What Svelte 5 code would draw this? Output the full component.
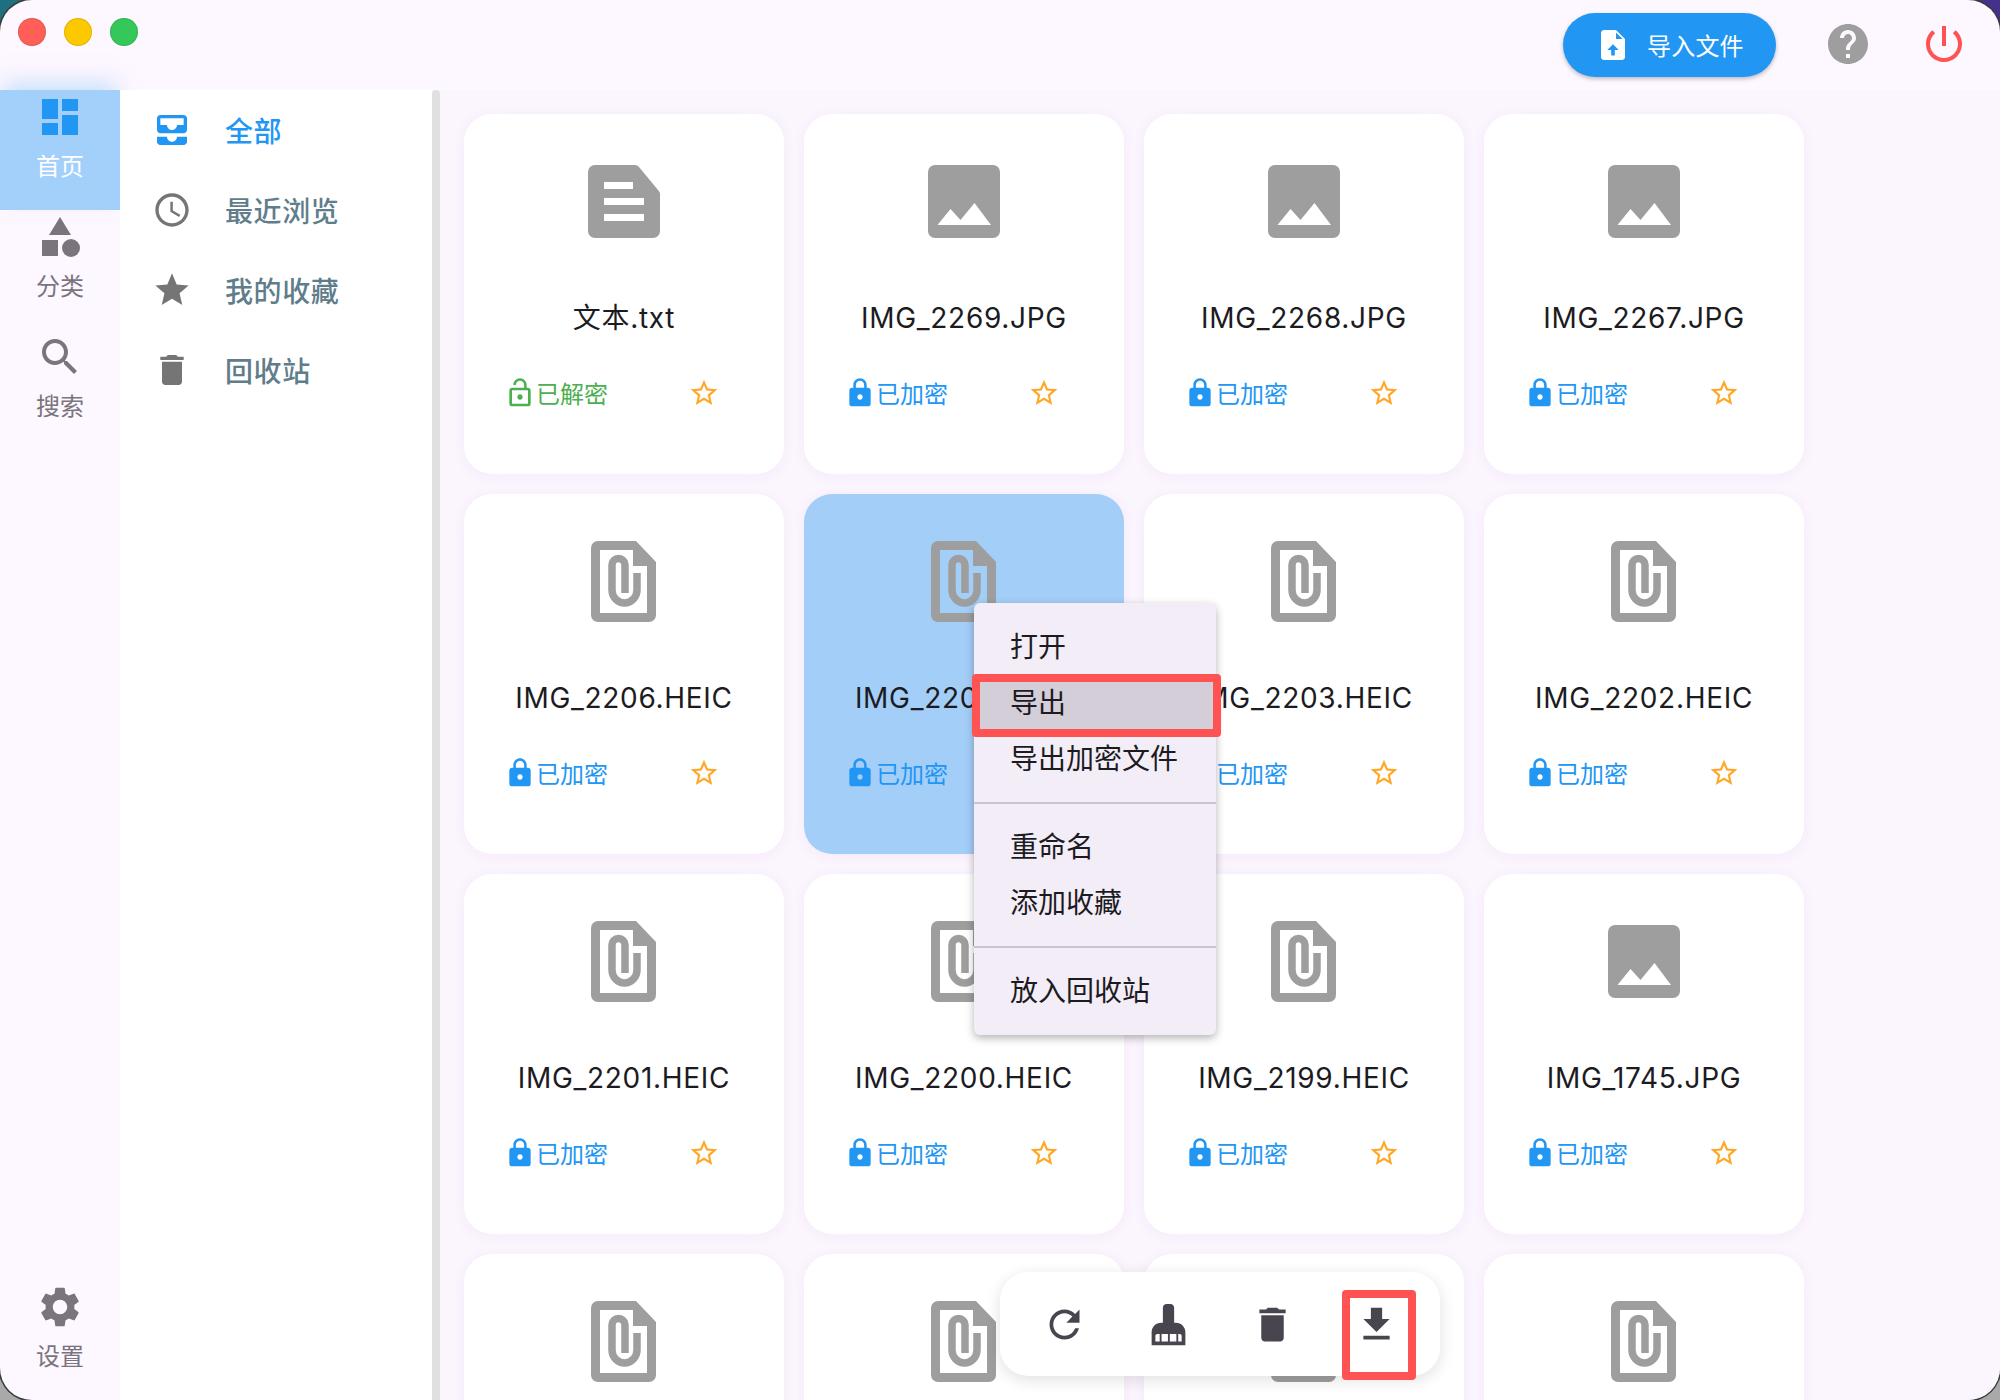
<script>
    const files = [
        { name: "文本.txt", kind: "text", open: true },
        { name: "IMG_2269.JPG", kind: "image" },
        { name: "IMG_2268.JPG", kind: "image" },
        { name: "IMG_2267.JPG", kind: "image" },
        { name: "IMG_2206.HEIC", kind: "clip" },
        { name: "IMG_2204.HEIC", kind: "clip", selected: true },
        { name: "IMG_2203.HEIC", kind: "clip" },
        { name: "IMG_2202.HEIC", kind: "clip" },
        { name: "IMG_2201.HEIC", kind: "clip" },
        { name: "IMG_2200.HEIC", kind: "clip" },
        { name: "IMG_2199.HEIC", kind: "clip" },
        { name: "IMG_1745.JPG", kind: "image" },
        { name: "IMG_1744.HEIC", kind: "clip" },
        { name: "IMG_1743.HEIC", kind: "clip" },
        { name: "IMG_1742.HEIC", kind: "clip" },
        { name: "IMG_1741.HEIC", kind: "clip" },
    ];

    const sections = [
        {
            label: "全部",
            active: true,
            d: "M19 3H5c-1.1 0-2 .9-2 2v7c0 1.1.9 2 2 2h14c1.1 0 2-.9 2-2V5c0-1.1-.9-2-2-2zm0 6h-4c0 1.62-1.38 3-3 3s-3-1.38-3-3H5V5h14v4zm-4 7h6v3c0 1.1-.9 2-2 2H5c-1.1 0-2-.9-2-2v-3h6c0 1.66 1.34 3 3 3s3-1.34 3-3z",
        },
        {
            label: "最近浏览",
            d: "M11.99 2C6.47 2 2 6.48 2 12s4.47 10 9.99 10C17.52 22 22 17.52 22 12S17.52 2 11.99 2zM12 20c-4.42 0-8-3.58-8-8s3.58-8 8-8 8 3.58 8 8-3.58 8-8 8zm.5-13H11v6l5.25 3.15.75-1.23-4.5-2.67z",
        },
        {
            label: "我的收藏",
            d: "M12 17.27L18.18 21l-1.64-7.03L22 9.24l-7.19-.61L12 2 9.19 8.63 2 9.24l5.46 4.73L5.82 21z",
        },
        {
            label: "回收站",
            d: "M6 19c0 1.1.9 2 2 2h8c1.1 0 2-.9 2-2V7H6v12zM19 4h-3.5l-1-1h-5l-1 1H5v2h14V4z",
        },
    ];

    const menu = [
        ["打开", "导出", "导出加密文件"],
        ["重命名", "添加收藏"],
        ["放入回收站"],
    ];
</script>

<div class="desktop">
    <div class="window">
        <header class="titlebar">
            <div class="lights">
                <span class="light red"></span>
                <span class="light yellow"></span>
                <span class="light green"></span>
            </div>
            <div class="actions">
                <button class="import">
                    <svg width="36" height="36" viewBox="0 0 24 24">
                        <path fill="#fff" d="M14 2H6c-1.1 0-2 .9-2 2v16c0 1.1.9 2 2 2h12c1.1 0 2-.9 2-2V8l-6-6z" />
                        <path fill="#2196f3" d="M14 3.6 18.4 8H14zM8.2 15.4l3.8-3.9 3.8 3.9h-2.6V19h-2.4v-3.6z" />
                    </svg>
                    <span>导入文件</span>
                </button>
                <svg width="48" height="48" viewBox="0 0 24 24" fill="#9e9e9e">
                    <path d="M12 2C6.48 2 2 6.48 2 12s4.48 10 10 10 10-4.48 10-10S17.52 2 12 2zm1 17h-2v-2h2v2zm2.07-7.75l-.9.92C13.45 12.9 13 13.5 13 15h-2v-.5c0-1.1.45-2.1 1.17-2.83l1.24-1.26c.37-.36.59-.86.59-1.41 0-1.1-.9-2-2-2s-2 .9-2 2H8c0-2.21 1.79-4 4-4s4 1.79 4 4c0 .88-.36 1.68-.93 2.25z" />
                </svg>
                <svg width="48" height="48" viewBox="0 0 24 24" fill="#ff5252">
                    <path d="M13 3h-2v10h2V3zm4.83 2.17l-1.42 1.42C17.99 7.86 19 9.81 19 12c0 3.87-3.13 7-7 7s-7-3.13-7-7c0-2.19 1.01-4.14 2.58-5.42L6.17 5.17C4.23 6.82 3 9.26 3 12c0 4.97 4.03 9 9 9s9-4.03 9-9c0-2.74-1.23-5.18-3.17-6.83z" />
                </svg>
            </div>
        </header>

        <div class="body">
            <nav class="rail">
                <div class="rail-item selected">
                    <svg width="48" height="48" viewBox="0 0 24 24" fill="#2196f3">
                        <path d="M3 13h8V3H3v10zm0 8h8v-6H3v6zm10 0h8V11h-8v10zm0-18v6h8V3h-8z" />
                    </svg>
                    <span>首页</span>
                </div>
                <div class="rail-item">
                    <svg width="48" height="48" viewBox="0 0 24 24">
                        <path d="M12 2l-5.5 9h11z" />
                        <circle cx="17.5" cy="17.5" r="4.5" />
                        <path d="M3 13.5h8v8H3z" />
                    </svg>
                    <span>分类</span>
                </div>
                <div class="rail-item">
                    <svg width="48" height="48" viewBox="0 0 24 24">
                        <path d="M15.5 14h-.79l-.28-.27C15.41 12.59 16 11.11 16 9.5 16 5.91 13.09 3 9.5 3S3 5.91 3 9.5 5.91 16 9.5 16c1.61 0 3.09-.59 4.23-1.57l.27.28v.79l5 4.99L20.49 19l-4.99-5zm-6 0C7.01 14 5 11.99 5 9.5S7.01 5 9.5 5 14 7.01 14 9.5 11.99 14 9.5 14z" />
                    </svg>
                    <span>搜索</span>
                </div>
                <div class="rail-item bottom">
                    <svg width="48" height="48" viewBox="0 0 24 24">
                        <path d="M19.14 12.94c.04-.3.06-.61.06-.94 0-.32-.02-.64-.07-.94l2.03-1.58c.18-.14.23-.41.12-.61l-1.92-3.32c-.12-.22-.37-.29-.59-.22l-2.39.96c-.5-.38-1.03-.7-1.62-.94l-.36-2.54c-.04-.24-.24-.41-.48-.41h-3.84c-.24 0-.43.17-.47.41l-.36 2.54c-.59.24-1.13.57-1.62.94l-2.39-.96c-.22-.08-.47 0-.59.22L2.74 8.87c-.12.21-.08.47.12.61l2.03 1.58c-.05.3-.09.63-.09.94s.02.64.07.94l-2.03 1.58c-.18.14-.23.41-.12.61l1.92 3.32c.12.22.37.29.59.22l2.39-.96c.5.38 1.03.7 1.62.94l.36 2.54c.05.24.24.41.48.41h3.84c.24 0 .44-.17.47-.41l.36-2.54c.59-.24 1.13-.56 1.62-.94l2.39.96c.22.08.47 0 .59-.22l1.92-3.32c.12-.22.07-.47-.12-.61l-2.01-1.58zM12 15.6c-1.98 0-3.6-1.62-3.6-3.6s1.62-3.6 3.6-3.6 3.6 1.62 3.6 3.6-1.62 3.6-3.6 3.6z" />
                    </svg>
                    <span>设置</span>
                </div>
            </nav>

            <aside class="panel">
                {#each sections as s}
                    <div class="panel-item" class:active={s.active}>
                        <svg width="40" height="40" viewBox="0 0 24 24"><path d={s.d} /></svg>
                        <span>{s.label}</span>
                    </div>
                {/each}
            </aside>
            <div class="scrollbar"></div>

            <main class="content">
                <div class="grid">
                    {#each files as f}
                        <div class="card" class:selected={f.selected}>
                            <div class="file-icon">
                                {#if f.kind === "text"}
                                    <svg width="72" height="73" viewBox="0 0 72 73">
                                        <path fill="#9e9e9e" d="M7 0H47a5 5 0 0 1 4 2L70 25a6 6 0 0 1 2 5V66a7 7 0 0 1-7 7H7a7 7 0 0 1-7-7V7a7 7 0 0 1 7-7z" />
                                        <path fill="#fff" d="M16 17H45V24H16zM16 33H56V40H16zM16 49H56V56H16z" />
                                    </svg>
                                {:else if f.kind === "image"}
                                    <svg width="72" height="73" viewBox="0 0 72 73">
                                        <rect width="72" height="73" rx="7" fill="#9e9e9e" />
                                        <path fill="#fff" d="M9.5 60 22.5 44 32.5 55 46.5 38 63 60z" />
                                    </svg>
                                {:else}
                                    <svg width="66" height="81" viewBox="0 0 66 81">
                                        <path fill="#9e9e9e" fill-rule="evenodd" d="M7 0H45L65 21V74a7 7 0 0 1-7 7H7a7 7 0 0 1-7-7V7a7 7 0 0 1 7-7zM9 9V72H56V25H42V9z" />
                                        <path fill="none" stroke="#9e9e9e" stroke-width="7.5" d="M46 32V49a12.5 13 0 0 1-25 0V24a6.5 6.5 0 0 1 13 0V52" />
                                    </svg>
                                {/if}
                            </div>
                            <div class="name">{f.name}</div>
                            <div class="status" class:open={f.open}>
                                <svg width="32" height="32" viewBox="0 0 24 24">
                                    {#if f.open}
                                        <path d="M12 17c1.1 0 2-.9 2-2s-.9-2-2-2-2 .9-2 2 .9 2 2 2zm6-9h-1V6c0-2.76-2.24-5-5-5S7 3.24 7 6h1.9c0-1.71 1.39-3.1 3.1-3.1 1.71 0 3.1 1.39 3.1 3.1v2H6c-1.1 0-2 .9-2 2v10c0 1.1.9 2 2 2h12c1.1 0 2-.9 2-2V10c0-1.1-.9-2-2-2zm0 12H6V10h12v10z" />
                                    {:else}
                                        <path d="M18 8h-1V6c0-2.76-2.24-5-5-5S7 3.24 7 6v2H6c-1.1 0-2 .9-2 2v10c0 1.1.9 2 2 2h12c1.1 0 2-.9 2-2V10c0-1.1-.9-2-2-2zm-6 9c-1.1 0-2-.9-2-2s.9-2 2-2 2 .9 2 2-.9 2-2 2zm3.1-9H8.9V6c0-1.71 1.39-3.1 3.1-3.1 1.71 0 3.1 1.39 3.1 3.1v2z" />
                                    {/if}
                                </svg>
                                <span class="state">{f.open ? "已解密" : "已加密"}</span>
                                <svg class="star" width="32" height="32" viewBox="0 0 24 24">
                                    <path d="M22 9.24l-7.19-.62L12 2 9.19 8.63 2 9.24l5.46 4.73L5.82 21 12 17.27 18.18 21l-1.63-7.03L22 9.24zM12 15.4l-3.76 2.27 1-4.28-3.32-2.88 4.38-.38L12 6.1l1.71 4.04 4.38.38-3.32 2.88 1 4.28L12 15.4z" />
                                </svg>
                            </div>
                        </div>
                    {/each}
                </div>
            </main>
        </div>

        <div class="context-menu">
            {#each menu as group, i}
                {#if i > 0}<div class="divider"></div>{/if}
                {#each group as item}
                    <div class="menu-item" class:hover={item === "导出"}>{item}</div>
                {/each}
            {/each}
        </div>
        <div class="mark mark-menu"></div>

        <div class="toolbar">
            <div class="tool">
                <svg width="45" height="45" viewBox="0 0 24 24">
                    <path d="M17.65 6.35C16.2 4.9 14.21 4 12 4c-4.42 0-7.99 3.58-7.99 8s3.57 8 7.99 8c3.73 0 6.84-2.55 7.73-6h-2.08c-.82 2.33-3.04 4-5.65 4-3.31 0-6-2.69-6-6s2.69-6 6-6c1.66 0 3.14.69 4.22 1.78L13 11h7V4l-2.35 2.35z" />
                </svg>
            </div>
            <div class="tool">
                <svg width="45" height="45" viewBox="0 0 24 24">
                    <path d="M16 11h-1V3c0-1.1-.9-2-2-2h-2c-1.1 0-2 .9-2 2v8H8c-2.76 0-5 2.24-5 5v7h18v-7c0-2.76-2.24-5-5-5z" />
                    <path fill="#fff" d="M5 21V18a1 1 0 0 1 1-1h1.3v4zM8.3 21V17h3.4v4zM12.7 21V17h3.5v4zM17.2 21V17h.8a1 1 0 0 1 1 1v3z" />
                </svg>
            </div>
            <div class="tool">
                <svg width="45" height="45" viewBox="0 0 24 24">
                    <path d="M6 19c0 1.1.9 2 2 2h8c1.1 0 2-.9 2-2V7H6v12zM19 4h-3.5l-1-1h-5l-1 1H5v2h14V4z" />
                </svg>
            </div>
            <div class="tool">
                <svg width="45" height="45" viewBox="0 0 24 24">
                    <path d="M19 9h-4V3H9v6H5l7 7 7-7zM5 18v2h14v-2H5z" />
                </svg>
            </div>
        </div>
        <div class="mark mark-tool"></div>
    </div>
</div>

<style>
    :global(body) {
        margin: 0;
        overflow: hidden;
    }

    .desktop {
        width: 2000px;
        height: 1400px;
        overflow: hidden;
        background:
            linear-gradient(to right, #1f6f80 50%, #45308c 50%) top / 100% 50% no-repeat,
            #a9a9a9;
        font-family: "Inter", "Noto Sans CJK SC", sans-serif;
    }

    .window {
        position: relative;
        width: 2000px;
        height: 1400px;
        display: flex;
        flex-direction: column;
        border-radius: 32px;
        overflow: hidden;
        background: #fdf7ff;
        box-shadow: 0 0 0 1.5px #3a3a3a;
    }

    /* barra de cima */
    .titlebar {
        height: 90px;
        flex: none;
        display: flex;
        justify-content: space-between;
        padding: 0 32px 0 18px;
    }

    .lights {
        display: flex;
        gap: 18px;
        padding-top: 18px;
    }

    .light {
        width: 28px;
        height: 28px;
        border-radius: 50%;
        box-shadow: inset 0 0 0 1px rgba(0, 0, 0, 0.1);
    }

    .red { background: #ff5f57; }
    .yellow { background: #fcc800; }
    .green { background: #34c759; }

    .actions {
        display: flex;
        align-items: flex-start;
        gap: 48px;
        padding-top: 13px;
    }

    .actions > svg {
        margin-top: 7px;
    }

    .import {
        height: 64px;
        width: 213px;
        display: flex;
        align-items: center;
        gap: 16px;
        padding: 0 0 0 32px;
        border: none;
        border-radius: 32px;
        background: #2196f3;
        color: #fff;
        font: inherit;
        font-size: 24px;
        letter-spacing: 0.2px;
        box-shadow: 0 2px 4px rgba(0, 0, 0, 0.25);
    }

    .import span {
        margin-bottom: 2px;
    }

    .body {
        flex: 1;
        display: flex;
        min-height: 0;
    }

    /* menu lateral */
    .rail {
        width: 120px;
        flex: none;
        display: flex;
        flex-direction: column;
    }

    .rail-item {
        height: 120px;
        box-sizing: border-box;
        padding-top: 3px;
        display: flex;
        flex-direction: column;
        align-items: center;
        gap: 11px;
        color: #79747e;
        font-size: 24px;
        line-height: 30px;
    }

    .rail-item svg {
        fill: #79747e;
    }

    .rail-item.selected {
        background: #a3d0fa;
        color: #fff;
        box-shadow: 0 -12px 20px -4px rgba(163, 208, 250, 0.55);
    }

    .rail-item.selected svg {
        fill: #2196f3;
    }

    .rail-item.bottom {
        margin-top: auto;
    }

    .panel {
        width: 312px;
        flex: none;
        background: #fff;
    }

    .panel-item {
        height: 80px;
        display: flex;
        align-items: center;
        gap: 33px;
        padding-left: 32px;
        color: #607d8b;
        font-size: 28px;
        font-weight: 500;
        letter-spacing: 0.6px;
    }

    .panel-item svg {
        fill: #757575;
    }

    .panel-item.active {
        color: #2196f3;
    }

    .panel-item.active svg {
        fill: #2196f3;
    }

    .scrollbar {
        width: 8px;
        flex: none;
        background: #e0e0e0;
        border-radius: 4px 4px 0 0;
    }

    /* grade de arquivos */
    .content {
        flex: 1;
        padding: 24px 0 0 24px;
        overflow: hidden;
        background: #fbf5fe;
    }

    .grid {
        display: grid;
        grid-template-columns: repeat(4, 320px);
        grid-auto-rows: 360px;
        gap: 20px;
    }

    .card {
        box-sizing: border-box;
        padding-top: 37px;
        background: #fff;
        border-radius: 28px;
        box-shadow: 0 2px 14px rgba(120, 60, 180, 0.05);
    }

    .card.selected {
        background: #a3cef8;
    }

    .file-icon {
        height: 100px;
        display: flex;
        align-items: center;
        justify-content: center;
    }

    .name {
        margin-top: 47px;
        line-height: 40px;
        text-align: center;
        font-size: 28px;
        letter-spacing: 0.7px;
        color: #1c1b1f;
    }

    .status {
        margin-top: 39px;
        height: 32px;
        display: flex;
        align-items: center;
        padding-left: 40px;
        color: #2196f3;
        font-size: 24px;
    }

    .state {
        margin-bottom: 2px;
    }

    .status svg {
        fill: #2196f3;
        flex: none;
    }

    .status.open {
        color: #4caf50;
    }

    .status.open svg {
        fill: #4caf50;
    }

    .status svg.star {
        fill: #ffa726;
        margin-left: 80px;
    }

    /* menu de contexto */
    .context-menu {
        position: absolute;
        left: 974px;
        top: 603px;
        width: 242px;
        box-sizing: border-box;
        padding: 16px 0;
        background: #f3edf7;
        border-radius: 6px;
        box-shadow: 0 3px 8px rgba(0, 0, 0, 0.3);
    }

    .menu-item {
        height: 56px;
        line-height: 56px;
        padding-left: 36px;
        color: #1c1b1f;
        font-size: 28px;
    }

    .menu-item.hover {
        background: #d3ced7;
    }

    .divider {
        height: 2px;
        margin: 15px 0;
        background: #cac4d0;
    }

    .toolbar {
        position: absolute;
        left: 1000px;
        top: 1272px;
        width: 440px;
        height: 104px;
        box-sizing: border-box;
        padding: 0 12px;
        display: flex;
        background: #fff;
        border-radius: 28px;
        box-shadow: 0 4px 16px rgba(0, 0, 0, 0.12);
    }

    .tool {
        width: 104px;
        display: flex;
        align-items: center;
        justify-content: center;
    }

    .tool svg {
        fill: #49454f;
    }

    /* caixas vermelhas */
    .mark {
        position: absolute;
        box-sizing: border-box;
        border: 8px solid #ff5252;
        border-radius: 4px;
    }

    .mark-menu {
        left: 972px;
        top: 674px;
        width: 249px;
        height: 63px;
    }

    .mark-tool {
        left: 1342px;
        top: 1290px;
        width: 74px;
        height: 90px;
    }
</style>
